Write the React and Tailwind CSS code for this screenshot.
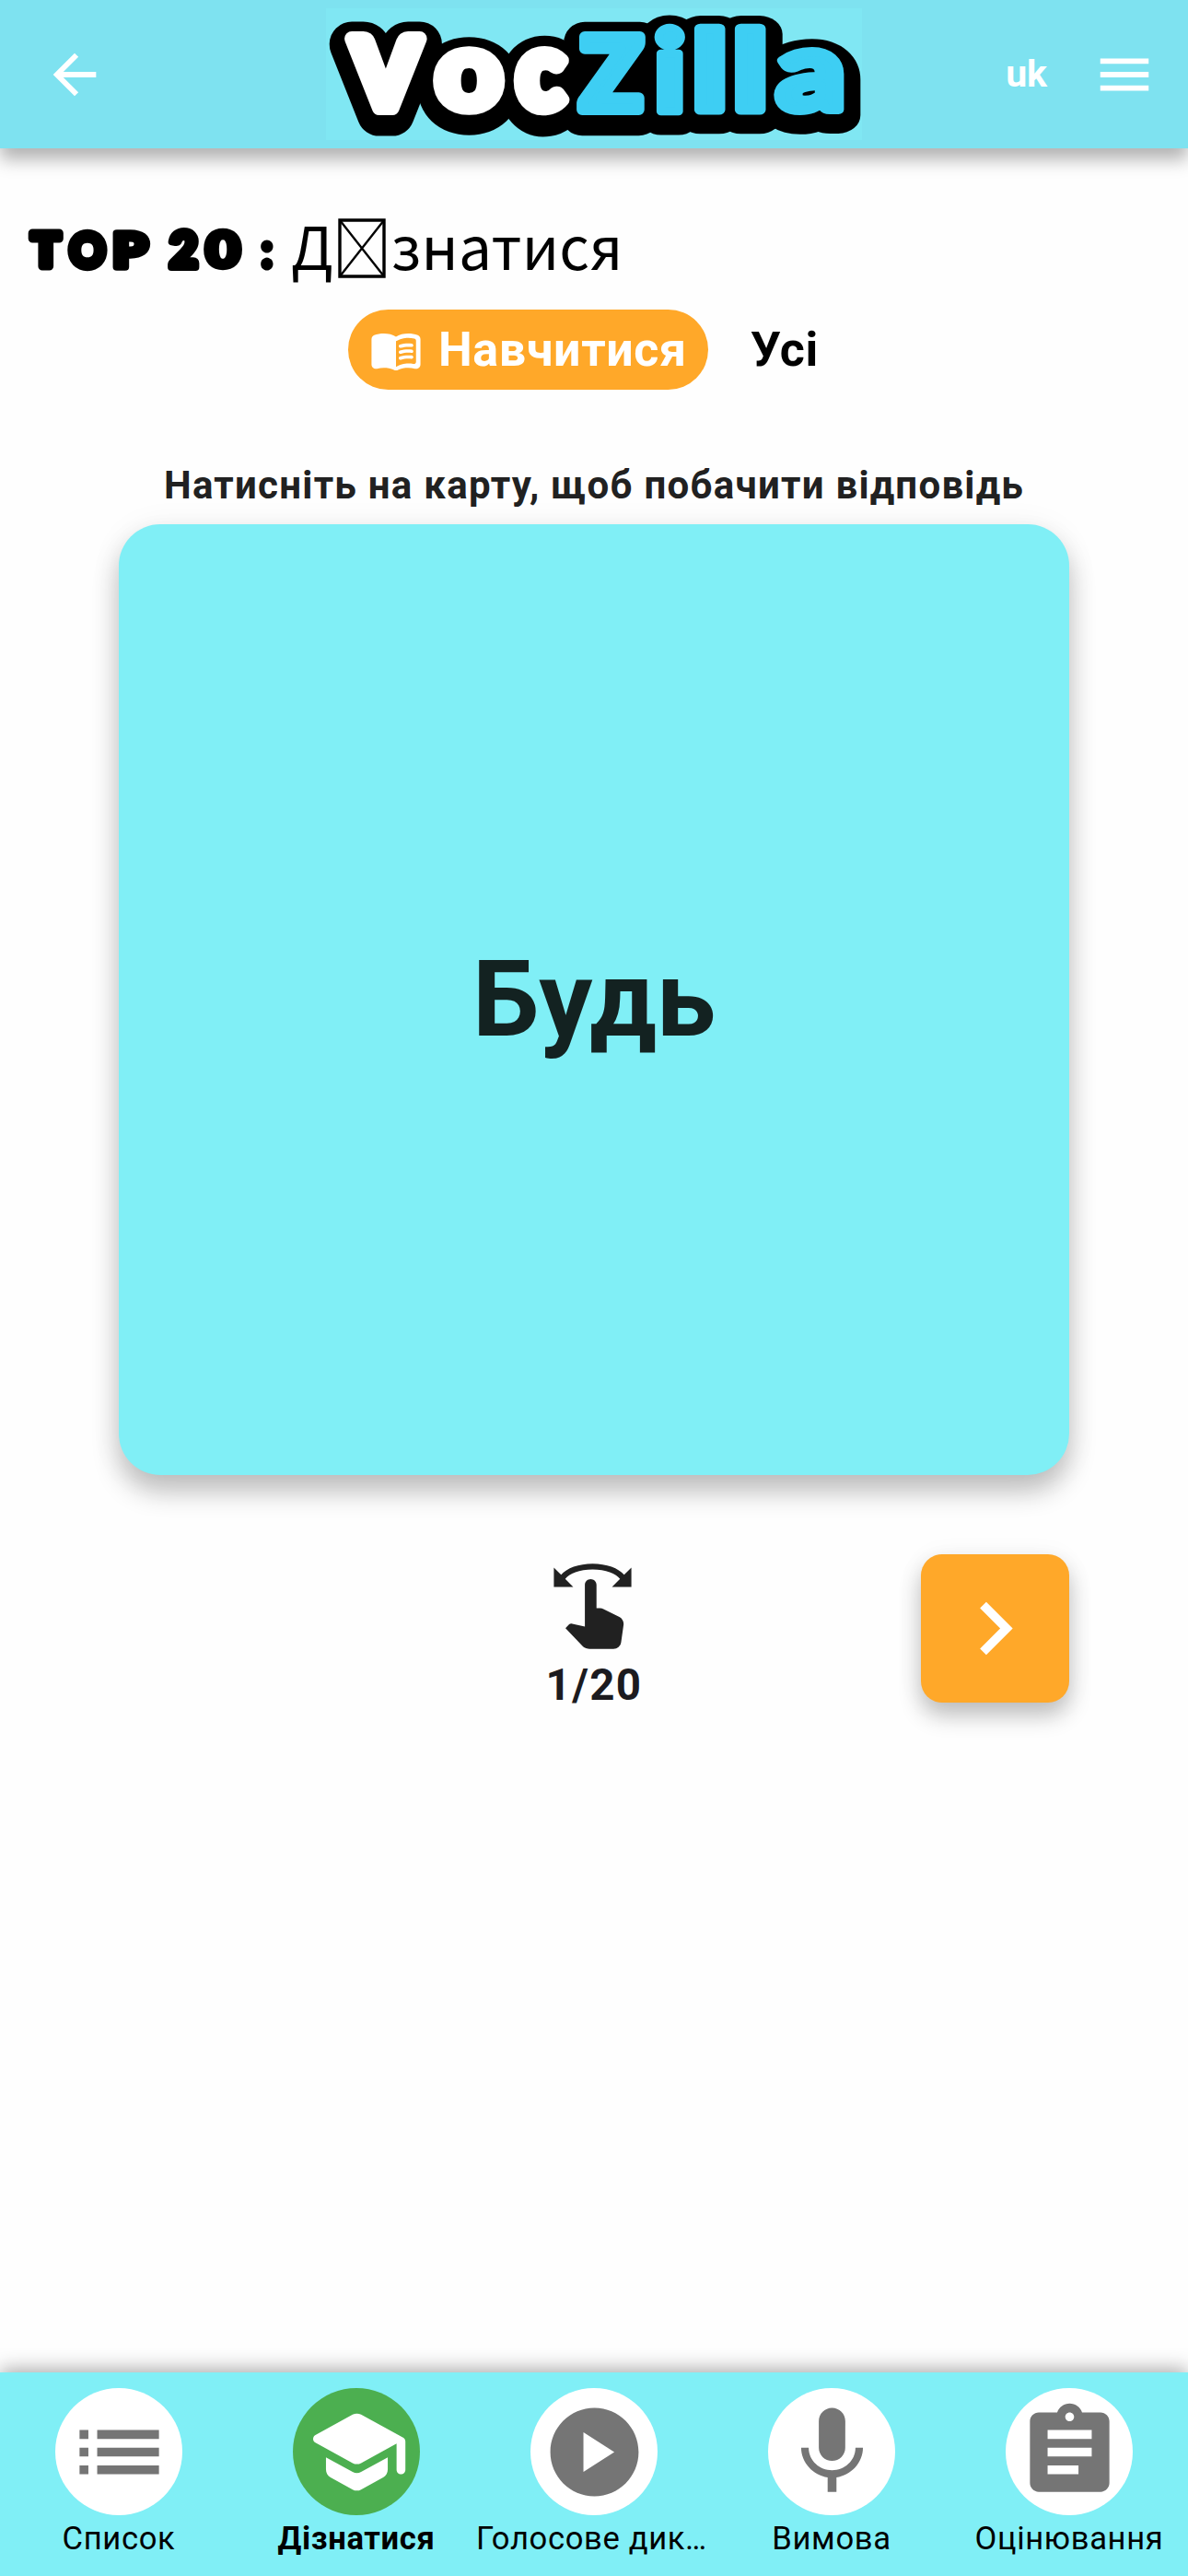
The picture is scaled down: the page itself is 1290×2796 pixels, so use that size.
// Ink box of a glyph at 100px, measured large for sub-pixel precision.
const measure = (ch) => {
  const ctx = document.createElement("canvas").getContext("2d");
  ctx.font = "900 1000px Lato";
  const m = ctx.measureText(ch);
  return {
    left: -m.actualBoundingBoxLeft / 10,
    top: -m.actualBoundingBoxAscent / 10,
    width: (m.actualBoundingBoxLeft + m.actualBoundingBoxRight) / 10,
    height: (m.actualBoundingBoxAscent + m.actualBoundingBoxDescent) / 10,
  };
};

// A heavy rounded letter, stretched so that its stroked shape fills [x, y, width, height].
// Fill and stroke come from the enclosing group, as does the extra --outline width.
function BlockLetter({ ch, box, weight }) {
  const m = measure(ch);
  const [x, y, w, h] = box;
  const sx = (w - weight) / m.width;
  const sy = (h - weight) / m.height;
  const tx = x + weight / 2 - m.left * sx;
  const ty = y + weight / 2 - m.top * sy;
  return (
    <text
      className="font-black"
      fontFamily="Lato, sans-serif"
      fontSize="100"
      strokeLinejoin="round"
      vectorEffect="non-scaling-stroke"
      style={{ strokeWidth: `calc(var(--outline, 0px) + ${weight}px)` }}
      transform={`matrix(${sx} 0 0 ${sy} ${tx} ${ty})`}
    >
      {ch}
    </text>
  );
}

const VOC = [
  ["V", [19.5, 24.3, 91, 91.7], 16],
  ["o", [114.4, 40, 81.6, 77], 12],
  ["c", [202, 40, 64, 77], 14],
];

const ZILLA = [
  ["Z", [272, 24.7, 76, 91.3], 12],
  ["i", [355, 15.7, 35, 100.3], 9],
  ["l", [399, 15.7, 35, 100.3], 12],
  ["l", [443, 15.7, 35, 100.3], 12],
  ["a", [486, 40, 77, 77], 11],
];

const Letters = ({ items }) =>
  items.map(([ch, box, weight], i) => <BlockLetter key={i} ch={ch} box={box} weight={weight} />);

function Logo() {
  return (
    <svg width="582" height="143" viewBox="0 0 582 143" className="overflow-visible bg-[#80e7f3]">
      <g transform="translate(0 6)" fill="#000000" stroke="#000000" className="[--outline:33px]">
        <use href="#logo-voc" />
        <use href="#logo-zilla" />
        <rect x="125" y="45" width="430" height="62" stroke="none" />
      </g>
      <g fill="#ffffff" stroke="#ffffff">
        <g id="logo-voc">
          <Letters items={VOC} />
        </g>
      </g>
      <g fill="#3ecef3" stroke="#3ecef3">
        <g id="logo-zilla">
          <Letters items={ZILLA} />
        </g>
      </g>
    </svg>
  );
}

const TOP_TITLE = [
  ["T", [30, 87.5, 39, 45], 9],
  ["O", [73, 86.5, 44, 47], 8],
  ["P", [122, 87, 41, 46], 8],
  ["2", [182, 86.5, 35, 46.5], 8],
  ["0", [221, 86.5, 42, 47], 7],
  [":", [283, 99, 14, 34.5], 5],
];

function TopTitle() {
  return (
    <svg width="316" height="175" viewBox="0 0 316 175" className="shrink-0 overflow-visible">
      <g fill="#000000" stroke="#000000">
        <Letters items={TOP_TITLE} />
      </g>
    </svg>
  );
}

function Icon({ size, d, className = "" }) {
  return (
    <svg width={size} height={size} viewBox="0 0 24 24" fill="currentColor" className={`shrink-0 ${className}`}>
      <path d={d} />
    </svg>
  );
}

const ICONS = {
  back: "M20 11H7.83l5.59-5.59L12 4l-8 8 8 8 1.41-1.41L7.83 13H20v-2z",
  menu: "M3 18h18v-2H3v2zm0-5h18v-2H3v2zm0-7v2h18V6H3z",
  book: "M17.5 4.5c-1.95 0-4.05.4-5.5 1.5-1.45-1.1-3.55-1.5-5.5-1.5-1.45 0-2.99.22-4.28.79C1.49 5.62 1 6.33 1 7.14v11.28c0 1.3 1.22 2.26 2.48 1.94.98-.25 2.02-.36 3.02-.36 1.56 0 3.22.26 4.56.92.6.3 1.28.3 1.87 0 1.34-.67 3-.92 4.56-.92 1 0 2.04.11 3.02.36 1.26.33 2.48-.63 2.48-1.94V7.14c0-.81-.49-1.52-1.22-1.85-1.28-.57-2.82-.79-4.27-.79zM21 17.23c0 .63-.58 1.09-1.2.98-.75-.14-1.53-.2-2.3-.2-1.7 0-4.15.65-5.5 1.5V8c1.35-.85 3.8-1.5 5.5-1.5.92 0 1.83.09 2.7.28.46.1.8.51.8.98v9.47zM13.98 11.01c-.32 0-.61-.2-.71-.52-.13-.39.09-.82.48-.94 1.54-.5 3.53-.66 5.36-.45.41.05.71.42.66.83-.05.41-.42.71-.83.66-1.62-.19-3.39-.04-4.73.39-.08.01-.16.03-.23.03zM13.98 13.67c-.32 0-.61-.2-.71-.52-.13-.39.09-.82.48-.94 1.54-.5 3.53-.66 5.36-.45.41.05.71.42.66.83-.05.41-.42.71-.83.66-1.62-.19-3.39-.04-4.73.39-.08.01-.16.03-.23.03zM13.98 16.33c-.32 0-.61-.2-.71-.52-.13-.39.09-.82.48-.94 1.54-.5 3.53-.66 5.36-.45.41.05.71.42.66.83-.05.41-.42.71-.83.66-1.62-.19-3.39-.04-4.73.39-.08.01-.16.03-.23.03z",
  swipe: "M18.89 14.75l-4.09-2.04c-.28-.14-.58-.21-.89-.21H13v-6C13 5.67 12.33 5 11.5 5S10 5.67 10 6.5v10.74l-3.25-.74c-.33-.07-.68.03-.92.28l-.83.84 4.54 4.79c.38.38 1.14.59 1.67.59h6.16c1 0 1.84-.73 1.98-1.72l.63-4.46c.12-.85-.32-1.68-1.09-2.07zM20.13 3.87C18.69 2.17 15.6 1 12 1S5.31 2.17 3.87 3.87L2 2v5h5L4.93 4.93c1-1.29 3.7-2.43 7.07-2.43s6.07 1.14 7.07 2.43L17 7h5V2l-1.87 1.87z",
  next: "M10 6L8.59 7.41 13.17 12l-4.58 4.59L10 18l6-6z",
  list: "M3 13h2v-2H3v2zm0 4h2v-2H3v2zm0-8h2V7H3v2zm4 4h14v-2H7v2zm0 4h14v-2H7v2zM7 7v2h14V7H7z",
  school: "M5 13.18v2.81c0 .73.4 1.41 1.04 1.76l5 2.73c.6.33 1.32.33 1.92 0l5-2.73c.64-.35 1.04-1.03 1.04-1.76v-2.81l-6.04 3.3c-.6.33-1.32.33-1.92 0L5 13.18zm6.04-9.66l-8.43 4.6c-.69.38-.69 1.38 0 1.76l8.43 4.6c.6.33 1.32.33 1.92 0L21 10.09V16c0 .55.45 1 1 1s1-.45 1-1V9.59c0-.37-.2-.7-.52-.88l-9.52-5.19c-.6-.32-1.32-.32-1.92 0z",
  play: "M12 2C6.48 2 2 6.48 2 12s4.48 10 10 10 10-4.48 10-10S17.52 2 12 2zm-2.5 14.5v-9l7 4.5-7 4.5z",
  mic: "M12 14c1.66 0 2.99-1.34 2.99-3L15 5c0-1.66-1.34-3-3-3S9 3.34 9 5v6c0 1.66 1.34 3 3 3zm5.3-3c0 3-2.54 5.1-5.3 5.1S6.7 14 6.7 11H5c0 3.41 2.72 6.23 6 6.72V21h2v-3.28c3.28-.48 6-3.3 6-6.72h-1.7z",
  assignment: "M19 3h-4.18C14.4 1.84 13.3 1 12 1c-1.3 0-2.4.84-2.82 2H5c-1.1 0-2 .9-2 2v14c0 1.1.9 2 2 2h14c1.1 0 2-.9 2-2V5c0-1.1-.9-2-2-2zm-7 0c.55 0 1 .45 1 1s-.45 1-1 1-1-.45-1-1 .45-1 1-1zm2 14H7v-2h7v2zm3-4H7v-2h10v2zm0-4H7V7h10v2z",
};

const TABS = [
  { label: "Список", icon: "list" },
  { label: "Дізнатися", icon: "school", active: true },
  { label: "Голосове дик…", icon: "play", nudge: "mr-[5px]" },
  { label: "Вимова", icon: "mic" },
  { label: "Оцінювання", icon: "assignment" },
];

export default function App() {
  return (
    <div className="flex h-[2796px] w-[1290px] flex-col overflow-hidden bg-[#fefefe] font-['Roboto',sans-serif]">
      <header className="z-10 grid h-[161px] shrink-0 grid-cols-[354px_582px_354px] items-center bg-[#7ee2f0] text-white shadow-[0_12px_18px_0_rgba(0,0,0,0.3)]">
        <Icon size={70} d={ICONS.back} className="ml-[46px]" />
        <Logo />
        <div className="flex items-center justify-end gap-[49px] pr-[34px]">
          <span className="text-[41px] leading-none font-bold">uk</span>
          <Icon size={70} d={ICONS.menu} />
        </div>
      </header>

      <main className="flex flex-1 flex-col">
        <h1 className="flex h-[175px] shrink-0 font-['Noto_Sans_CJK_JP',sans-serif] text-[64px] leading-[175px] text-black">
          <TopTitle />
          <span className="mt-[17px]">Д</span>
          <svg width="52" height="65" viewBox="0 0 52 65" fill="none" stroke="black" className="mt-[76px] ml-[5px] shrink-0">
            <path d="M2 2H50V63H2Z" strokeWidth="3.4" />
            <path d="M2 2L50 63M50 2L2 63" strokeWidth="2.4" />
          </svg>
          <span className="mt-[17px] ml-[6px] tracking-[0.3px]">знатися</span>
        </h1>

        <div className="flex h-[87px] shrink-0 items-center pl-[378px] text-[52px] leading-none font-bold">
          <div className="flex h-[87px] w-[391px] items-center rounded-full bg-[#ffa829] pl-[23px] text-white">
            <Icon size={58} d={ICONS.book} />
            <span className="ml-[17px] tracking-[0.6px]">Навчитися</span>
          </div>
          <span className="ml-[46px] tracking-[0.6px] text-black">Усі</span>
        </div>

        <p className="mt-[79px] text-center text-[42px] leading-[50px] font-bold tracking-[1.27px] text-[#212121]">
          Натисніть на карту, щоб побачити відповідь
        </p>

        <div className="mx-auto mt-[17px] flex h-[1032px] w-[1032px] shrink-0 items-center justify-center rounded-[45px] bg-[#80eff6] shadow-[0_18px_29px_0_rgba(0,0,0,0.24),0_3px_36px_0_rgba(0,0,0,0.06)]">
          <span className="text-[115.5px] leading-none font-bold text-[#132221]">Будь</span>
        </div>

        <div className="mx-auto mt-[86px] grid w-[1032px] grid-cols-[161px_1fr_161px]">
          <div className="col-start-2 flex flex-col items-center pt-[6px]">
            <Icon size={101} d={ICONS.swipe} className="mr-[3px] text-[#212121]" />
            <span className="mt-2 text-[47.5px] leading-[54px] font-bold tracking-[1.4px] text-[#1c1b1f]">1/20</span>
          </div>
          <button className="flex h-[161px] w-[161px] items-center justify-center rounded-[23px] bg-[#ffa829] text-white shadow-[0_14px_24px_0_rgba(0,0,0,0.24),0_3px_30px_0_rgba(0,0,0,0.05)]">
            <Icon size={115} d={ICONS.next} />
          </button>
        </div>
      </main>

      <nav className="grid h-[221px] shrink-0 grid-cols-5 bg-[#80eff6] pt-[17px] shadow-[0_-3px_20px_0_rgba(0,0,0,0.35)]">
        {TABS.map(({ label, icon, active, nudge = "" }) => (
          <div key={label} className="flex flex-col items-center">
            <span className={`flex size-[138px] items-center justify-center rounded-full ${active ? "bg-[#4caf50] text-white" : "bg-white text-[#757575]"}`}>
              <Icon size={115} d={ICONS[icon]} />
            </span>
            <span className={`mt-[4px] text-[34.6px] leading-[42px] tracking-[0.65px] whitespace-nowrap text-black ${active ? "font-bold" : ""} ${nudge}`}>{label}</span>
          </div>
        ))}
      </nav>
    </div>
  );
}
